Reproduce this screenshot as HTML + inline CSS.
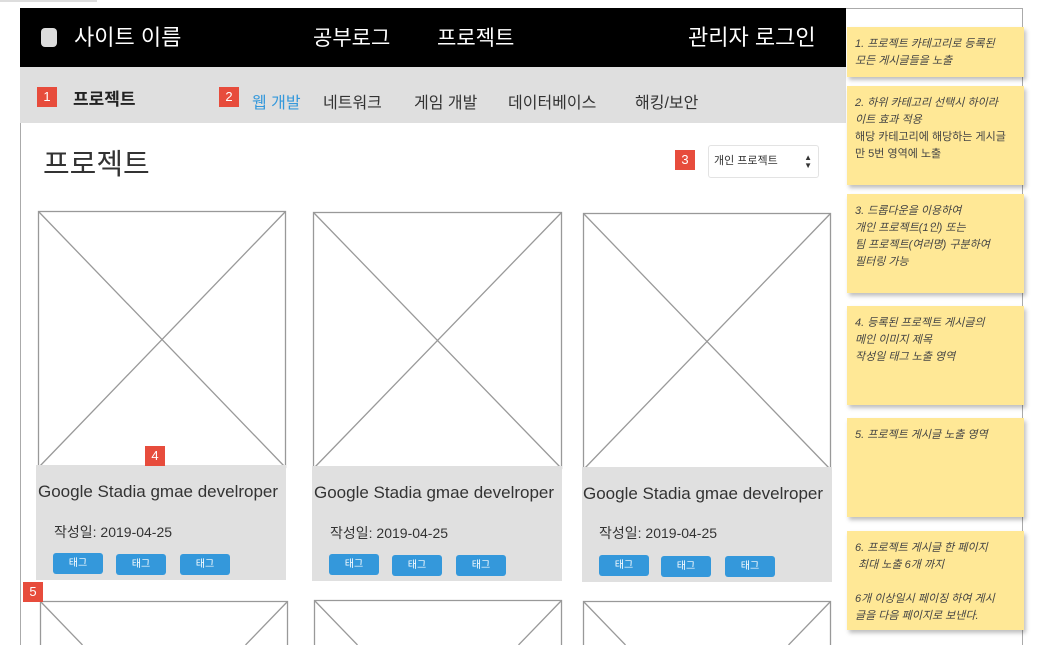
<!DOCTYPE html>
<html><head><meta charset="utf-8"><style>
*{margin:0;padding:0;box-sizing:border-box}
html,body{width:1043px;height:645px;overflow:hidden}
body{background:#fff;font-family:"Liberation Sans","Noto Sans CJK KR",sans-serif;position:relative;color:#333}
#w{position:absolute;left:0;top:0;width:1043px;height:645px;overflow:hidden}
.a{position:absolute}
.badge{position:absolute;width:20px;height:20px;background:#e74c3c;color:#fff;font-size:13px;line-height:20px;text-align:center}
.info{position:absolute;background:#e0e0e0}
.t{position:absolute;font-size:17px;color:#333;white-space:nowrap}
.d{position:absolute;font-size:14px;color:#333;white-space:nowrap}
.tag{position:absolute;width:50px;height:21px;background:#3498db;border-radius:3px;color:#fff;font-size:10px;text-align:center;line-height:21px}
.note{position:absolute;left:847px;width:177px;background:#ffe896;box-shadow:2px 3px 4px rgba(0,0,0,.25);font-size:11px;font-style:italic;color:#444;padding:9px 8px;line-height:17px}
.nav{position:absolute;top:89px;font-size:16px;color:#333;white-space:nowrap}
</style></head><body><div id="w">
<div class="a" style="left:0;top:0;width:97px;height:2px;background:#ddd"></div>
<div class="a" style="left:20px;top:8px;width:1003px;height:637px;border:1px solid #aaa;border-bottom:none"></div>
<div class="a" style="left:20px;top:8px;width:826px;height:59px;background:#000"></div>
<div class="a" style="left:41px;top:28px;width:16px;height:19px;background:#ddd;border-radius:4px"></div>
<div class="a" style="left:74px;top:20px;color:#fff;font-size:22px">사이트 이름</div>
<div class="a" style="left:313px;top:22px;color:#fff;font-size:21px">공부로그</div>
<div class="a" style="left:437px;top:22px;color:#fff;font-size:21px">프로젝트</div>
<div class="a" style="left:688px;top:20px;color:#fff;font-size:22px">관리자 로그인</div>
<div class="a" style="left:20px;top:67px;width:826px;height:56px;background:#dfdfdf"></div>
<div class="badge" style="left:37px;top:87px">1</div>
<div class="nav" style="left:73px;top:85px;font-size:17px;font-weight:bold;color:#222">프로젝트</div>
<div class="badge" style="left:219px;top:87px">2</div>
<div class="nav" style="left:252px;color:#3498db">웹 개발</div>
<div class="nav" style="left:323px">네트워크</div>
<div class="nav" style="left:414px">게임 개발</div>
<div class="nav" style="left:508px">데이터베이스</div>
<div class="nav" style="left:635px">해킹/보안</div>
<div class="a" style="left:43px;top:141px;font-size:29px;color:#333">프로젝트</div>
<div class="badge" style="left:675px;top:150px">3</div>
<div class="a" style="left:708px;top:145px;width:111px;height:33px;border:1px solid #e3e3e3;border-radius:3px;background:#fff;font-size:11px;line-height:31px;padding-left:5px;color:#333">개인 프로젝트<span style="position:absolute;right:6px;top:0;font-size:8px;line-height:8px;padding-top:8px">▲<br>▼</span></div>

<svg class="a" style="left:0;top:0;overflow:hidden" width="1043" height="645">
<g fill="#fff" stroke="#999" stroke-width="1.3">
<rect x="38.5" y="211.5" width="247" height="256"/><line x1="38.5" y1="211.5" x2="285.5" y2="467.5"/><line x1="285.5" y1="211.5" x2="38.5" y2="467.5"/>
<rect x="313.5" y="212.5" width="248" height="256"/><line x1="313.5" y1="212.5" x2="561.5" y2="468.5"/><line x1="561.5" y1="212.5" x2="313.5" y2="468.5"/>
<rect x="583.5" y="213.5" width="247" height="256"/><line x1="583.5" y1="213.5" x2="830.5" y2="469.5"/><line x1="830.5" y1="213.5" x2="583.5" y2="469.5"/>
<path d="M40.5 645V601.5H287.5V645"/><line x1="40.5" y1="601.5" x2="82.5" y2="645"/><line x1="287.5" y1="601.5" x2="245.5" y2="645"/>
<path d="M314.5 645V600.5H561.5V645"/><line x1="314.5" y1="600.5" x2="357.5" y2="645"/><line x1="561.5" y1="600.5" x2="518.5" y2="645"/>
<path d="M583.5 645V601.5H830.5V645"/><line x1="583.5" y1="601.5" x2="625.5" y2="645"/><line x1="830.5" y1="601.5" x2="788.5" y2="645"/>
</g></svg>

<div class="info" style="left:36px;top:465px;width:250px;height:115px"></div>
<div class="info" style="left:312px;top:466px;width:250px;height:115px"></div>
<div class="info" style="left:582px;top:467px;width:250px;height:115px"></div>
<div class="badge" style="left:145px;top:446px">4</div>
<div class="badge" style="left:23px;top:582px">5</div>

<div class="t" style="left:38px;top:482px">Google Stadia gmae develroper</div>
<div class="t" style="left:314px;top:483px">Google Stadia gmae develroper</div>
<div class="t" style="left:583px;top:484px">Google Stadia gmae develroper</div>
<div class="d" style="left:54px;top:522px">작성일: 2019-04-25</div>
<div class="d" style="left:330px;top:523px">작성일: 2019-04-25</div>
<div class="d" style="left:599px;top:523px">작성일: 2019-04-25</div>
<div class="tag" style="left:53px;top:553px">태그</div><div class="tag" style="left:116px;top:554px">태그</div><div class="tag" style="left:180px;top:554px">태그</div>
<div class="tag" style="left:329px;top:554px">태그</div><div class="tag" style="left:392px;top:555px">태그</div><div class="tag" style="left:456px;top:555px">태그</div>
<div class="tag" style="left:599px;top:555px">태그</div><div class="tag" style="left:661px;top:556px">태그</div><div class="tag" style="left:725px;top:556px">태그</div>

<div class="note" style="top:27px;height:50px;padding-top:9px">1. 프로젝트 카테고리로 등록된<br>모든 게시글들을 노출</div>
<div class="note" style="top:86px;height:99px">2. 하위 카테고리 선택시 하이라<br>이트 효과 적용<br><span style="font-style:normal">해당 카테고리에 해당하는 게시글<br>만 5번 영역에 노출</span></div>
<div class="note" style="top:194px;height:99px">3. 드롭다운을 이용하여<br>개인 프로젝트(1인) 또는<br>팀 프로젝트(여러명) 구분하여<br>필터링 가능</div>
<div class="note" style="top:306px;height:99px">4. 등록된 프로젝트 게시글의<br>메인 이미지 제목<br>작성일 태그 노출 영역</div>
<div class="note" style="top:418px;height:99px">5. 프로젝트 게시글 노출 영역</div>
<div class="note" style="top:531px;height:99px">6. 프로젝트 게시글 한 페이지<br>&nbsp;최대 노출 6개 까지<br><br>6개 이상일시 페이징 하여 게시<br>글을 다음 페이지로 보낸다.</div>
</div></body></html>
